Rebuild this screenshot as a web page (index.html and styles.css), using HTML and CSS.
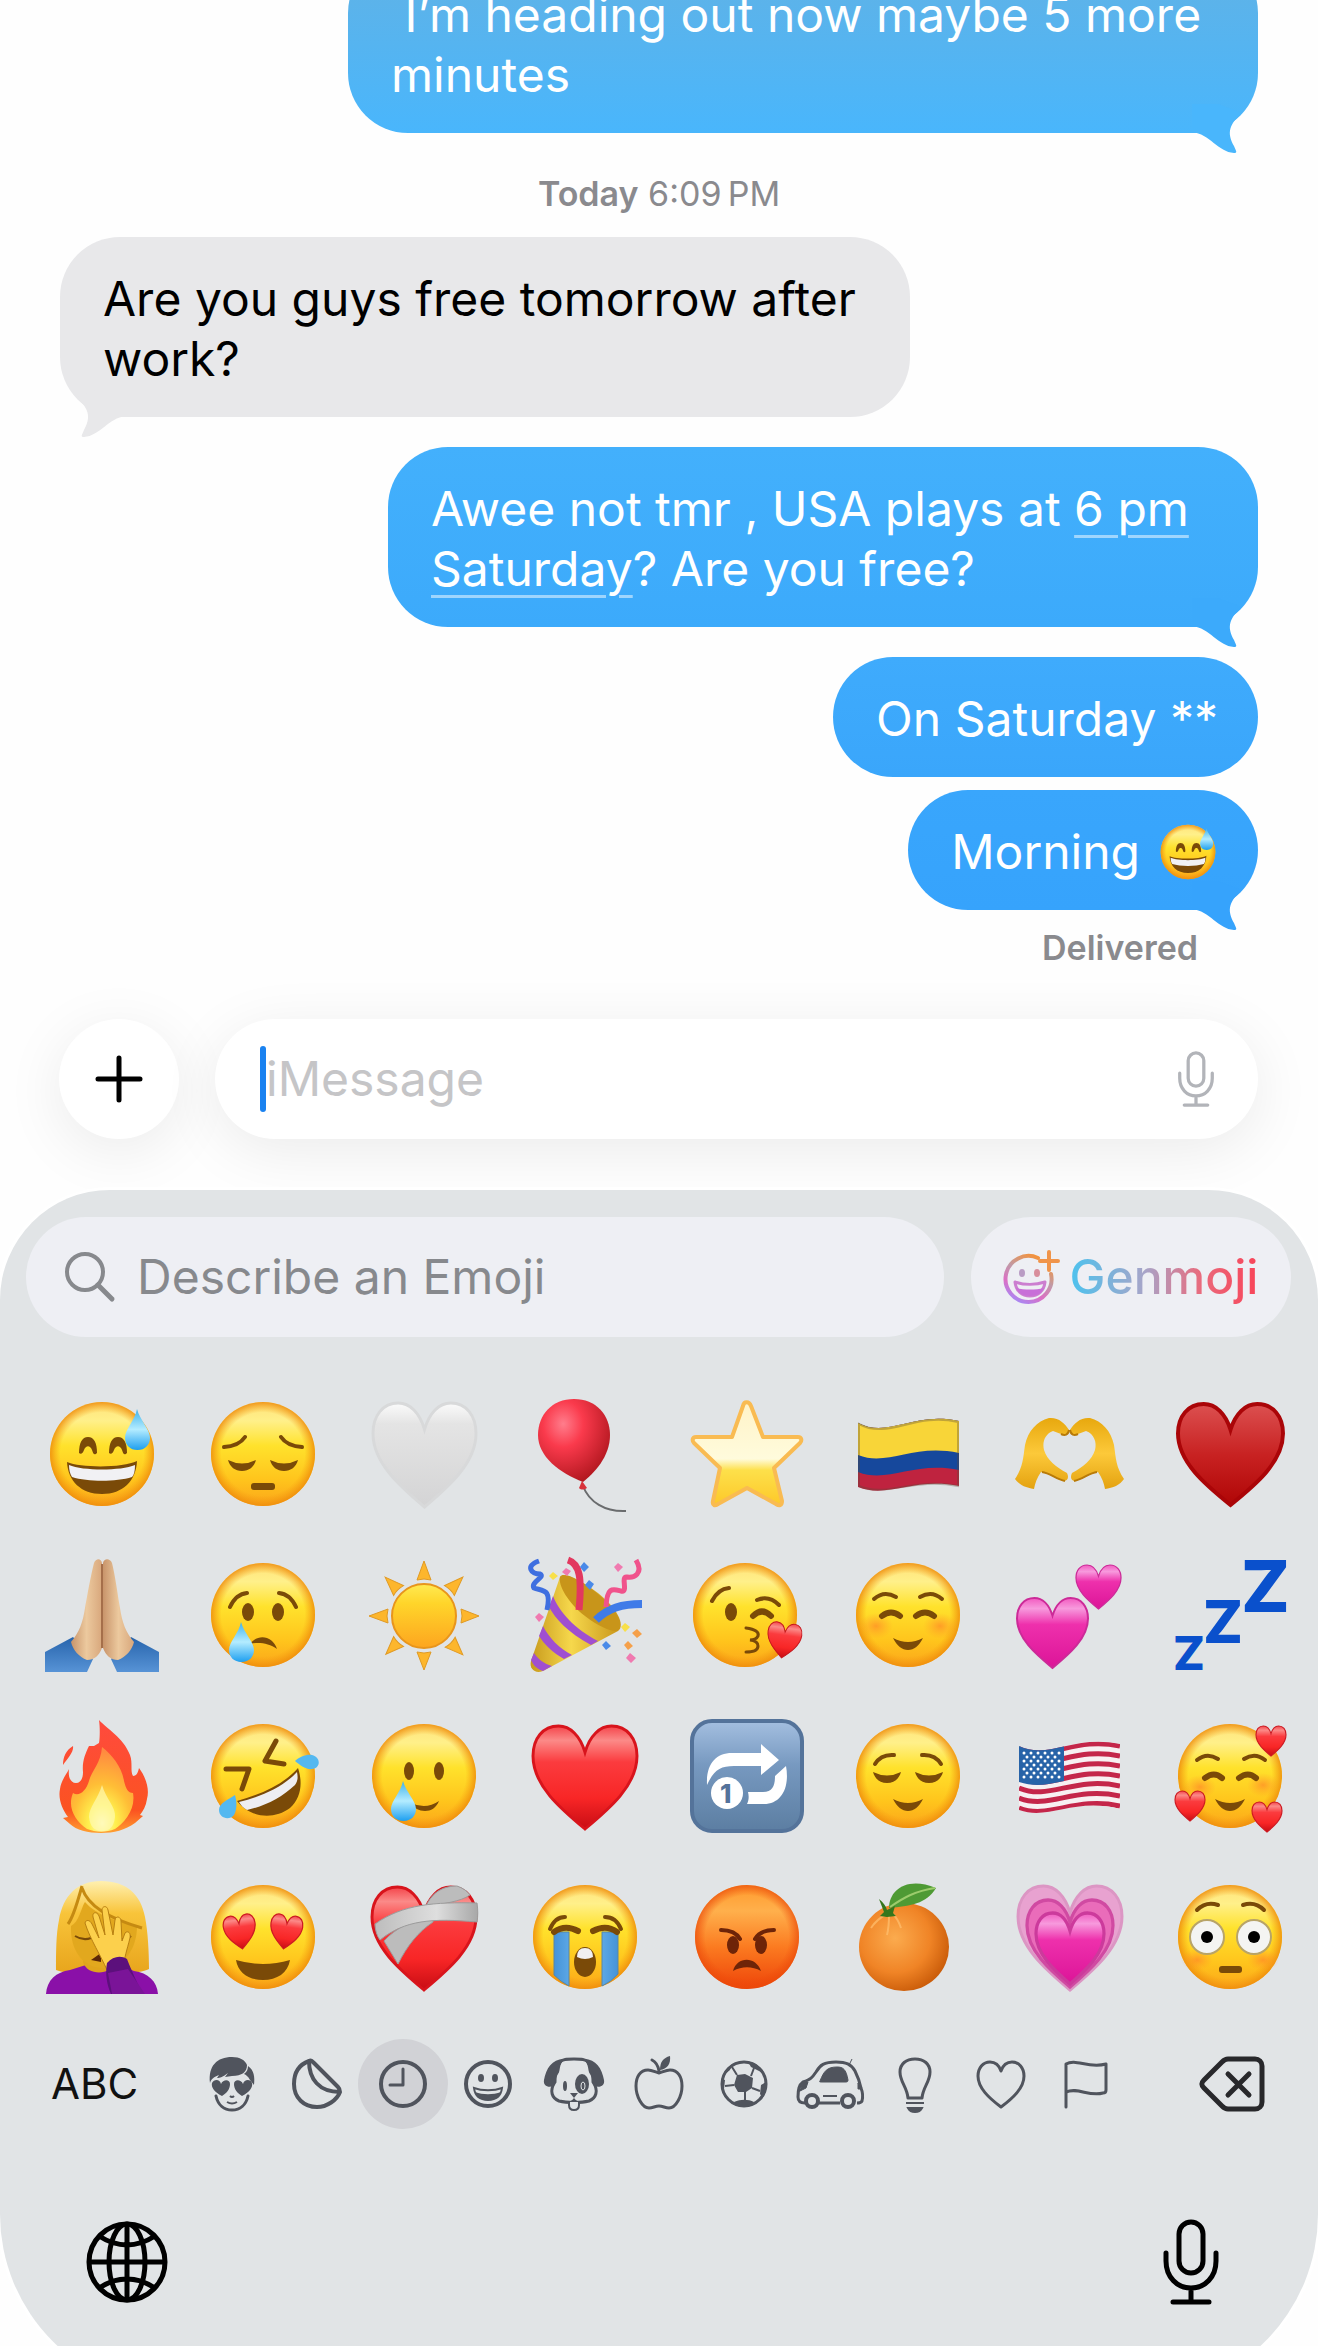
FILE: index.html
```
<!DOCTYPE html>
<html lang="en">
<head>
    <meta charset="UTF-8">
    <meta name="viewport" content="width=device-width, initial-scale=1.0">
    <title>Messages</title>
    <link rel="stylesheet" href="styles.css">
</head>
<body>
    <!-- Shared shapes and gradients -->
    <svg class="sprite" aria-hidden="true">
        <defs>
            <linearGradient id="face-fill" x1="0" y1="0" x2="0" y2="1">
                <stop offset="0" stop-color="#ffe27a"/>
                <stop offset=".18" stop-color="#fff08a"/>
                <stop offset=".42" stop-color="#ffe22c"/>
                <stop offset=".75" stop-color="#ffc41c"/>
                <stop offset="1" stop-color="#fba51a"/>
            </linearGradient>
            <radialGradient id="face-edge">
                <stop offset=".8" stop-color="#f59a10" stop-opacity="0"/>
                <stop offset="1" stop-color="#ee8c0c" stop-opacity=".85"/>
            </radialGradient>
            <linearGradient id="angry-fill" x1="0" y1="0" x2="0" y2="1">
                <stop offset="0" stop-color="#ff9a2c"/>
                <stop offset=".25" stop-color="#ffb04c"/>
                <stop offset=".6" stop-color="#fb7a20"/>
                <stop offset="1" stop-color="#ee4409"/>
            </linearGradient>
            <radialGradient id="angry-edge">
                <stop offset=".8" stop-color="#ee4a0a" stop-opacity="0"/>
                <stop offset="1" stop-color="#ea4a0a" stop-opacity=".7"/>
            </radialGradient>
            <radialGradient id="blush">
                <stop offset="0" stop-color="#ff6a2a" stop-opacity=".5"/>
                <stop offset="1" stop-color="#ff8a2a" stop-opacity="0"/>
            </radialGradient>
            <linearGradient id="drop-fill" x1="0" y1="0" x2="0" y2="1">
                <stop offset="0" stop-color="#3eb2ea"/>
                <stop offset=".5" stop-color="#b4ecff"/>
                <stop offset="1" stop-color="#1d9ff0"/>
            </linearGradient>
            <linearGradient id="red-fill" x1="0" y1="0" x2="0" y2="1">
                <stop offset="0" stop-color="#f4444a"/>
                <stop offset=".14" stop-color="#fb8a88"/>
                <stop offset=".35" stop-color="#fb3b3e"/>
                <stop offset=".7" stop-color="#f82626"/>
                <stop offset="1" stop-color="#c80d14"/>
            </linearGradient>
            <linearGradient id="suit-fill" x1="0" y1="0" x2="0" y2="1">
                <stop offset="0" stop-color="#dc5050"/>
                <stop offset=".5" stop-color="#c82222"/>
                <stop offset="1" stop-color="#b00606"/>
            </linearGradient>
            <linearGradient id="white-fill" x1="0" y1="0" x2="0" y2="1">
                <stop offset="0" stop-color="#fbfbfb"/>
                <stop offset=".2" stop-color="#e4e4e4"/>
                <stop offset="1" stop-color="#d4d4d5"/>
            </linearGradient>
            <linearGradient id="pink-fill" x1="0" y1="0" x2="0" y2="1">
                <stop offset="0" stop-color="#f25ac0"/>
                <stop offset=".15" stop-color="#f79add"/>
                <stop offset=".38" stop-color="#ee30ac"/>
                <stop offset="1" stop-color="#dc1498"/>
            </linearGradient>
            <radialGradient id="balloon-fill" cx=".35" cy=".3" r=".8">
                <stop offset="0" stop-color="#ff7d8c"/>
                <stop offset=".35" stop-color="#fa3a4c"/>
                <stop offset="1" stop-color="#a81219"/>
            </radialGradient>
            <linearGradient id="star-fill" x1="0" y1="0" x2="0" y2="1">
                <stop offset="0" stop-color="#fff3c8"/>
                <stop offset=".55" stop-color="#fffbdc"/>
                <stop offset=".66" stop-color="#fde04a"/>
                <stop offset="1" stop-color="#fdc829"/>
            </linearGradient>
            <linearGradient id="sun-fill" x1="0" y1="0" x2="0" y2="1">
                <stop offset="0" stop-color="#ffea52"/>
                <stop offset=".3" stop-color="#ffd52a"/>
                <stop offset="1" stop-color="#fda51f"/>
            </linearGradient>
            <linearGradient id="hand-fill" x1="0" y1="0" x2="0" y2="1">
                <stop offset="0" stop-color="#e8a80e"/>
                <stop offset=".5" stop-color="#fcc93a"/>
                <stop offset="1" stop-color="#e4a210"/>
            </linearGradient>
            <linearGradient id="cone-fill" x1="0" y1="0" x2="1" y2="0">
                <stop offset="0" stop-color="#c89a1c"/>
                <stop offset=".45" stop-color="#f6d84c"/>
                <stop offset="1" stop-color="#c8951a"/>
            </linearGradient>
            <linearGradient id="fire-fill" x1="0" y1="0" x2="0" y2="1">
                <stop offset="0" stop-color="#ff4a3e"/>
                <stop offset=".8" stop-color="#fb5321"/>
                <stop offset="1" stop-color="#ffa030"/>
            </linearGradient>
            <radialGradient id="flame-fill" cx=".5" cy=".9" r=".85">
                <stop offset="0" stop-color="#fffbd0"/>
                <stop offset=".25" stop-color="#fff04e"/>
                <stop offset=".55" stop-color="#ffbe36"/>
                <stop offset="1" stop-color="#ff8a40"/>
            </radialGradient>
            <linearGradient id="square-fill" x1="0" y1="0" x2="0" y2="1">
                <stop offset="0" stop-color="#a4bfe0"/>
                <stop offset=".4" stop-color="#7799c0"/>
                <stop offset="1" stop-color="#5c7ea2"/>
            </linearGradient>
            <radialGradient id="orange-fill" cx=".4" cy=".4" r=".65">
                <stop offset="0" stop-color="#fbab4e"/>
                <stop offset=".6" stop-color="#f08426"/>
                <stop offset="1" stop-color="#c85a08"/>
            </radialGradient>
            <linearGradient id="hair-fill" x1="0" y1="0" x2="0" y2="1">
                <stop offset="0" stop-color="#fff0b0"/>
                <stop offset=".35" stop-color="#f8c43a"/>
                <stop offset="1" stop-color="#e8a51c"/>
            </linearGradient>
            <linearGradient id="bandage-fill" x1="0" y1="0" x2="1" y2="0">
                <stop offset="0" stop-color="#bdbdbd"/>
                <stop offset=".6" stop-color="#dedede"/>
                <stop offset="1" stop-color="#a8a8a8"/>
            </linearGradient>
            <linearGradient id="stream-fill" x1="0" y1="0" x2="1" y2="0">
                <stop offset="0" stop-color="#4593d8"/>
                <stop offset=".5" stop-color="#74bdf4"/>
                <stop offset="1" stop-color="#4593d8"/>
            </linearGradient>
            <linearGradient id="sleeve-fill" x1="0" y1="0" x2="0" y2="1">
                <stop offset="0" stop-color="#2764ac"/>
                <stop offset="1" stop-color="#5793d6"/>
            </linearGradient>
            <linearGradient id="skin-fill" x1="0" y1="0" x2="1" y2="0">
                <stop offset="0" stop-color="#c8946a"/>
                <stop offset=".5" stop-color="#ecc99e"/>
                <stop offset="1" stop-color="#d8a77c"/>
            </linearGradient>
            <linearGradient id="genmoji-fill" x1=".2" y1="1" x2=".7" y2="0">
                <stop offset="0" stop-color="#a48af8"/>
                <stop offset=".3" stop-color="#dc6fc4"/>
                <stop offset=".6" stop-color="#c09aa8"/>
                <stop offset="1" stop-color="#f59238"/>
            </linearGradient>

            <symbol id="face" viewBox="0 0 114 114">
                <circle cx="57" cy="57" r="52" fill="url(#face-fill)"/>
                <circle cx="57" cy="57" r="52" fill="url(#face-edge)"/>
            </symbol>
            <symbol id="heart" viewBox="0 0 106 106" preserveAspectRatio="none">
                <path d="M53 27C48 10 38 0 26 0 10 0 0 13 0 31c0 30 28 54 53 75 25-21 53-45 53-75C106 13 96 0 80 0 68 0 58 10 53 27z"/>
            </symbol>
            <symbol id="drop" viewBox="0 0 25 40" preserveAspectRatio="none">
                <path d="M12 0c3 11 13 20 13 28 0 7-5 12-12.500 12S0 35 0 28C0 20 10 11 12 0z" fill="url(#drop-fill)"/>
            </symbol>
            <symbol id="sweat" viewBox="0 0 114 114">
                <use href="#face"/>
                <g fill="#7a4a08">
                    <path d="M34 56c0-10 3-16 9-16s9 6 9 16c-3 3-4 0-5-3-2-5-6-5-8 0-1 3-3 5-5 3zM64 56c0-10 3-16 9-16s9 6 9 16c-3 3-4 0-5-3-2-5-6-5-8 0-1 3-3 5-5 3z"/>
                    <path d="M22 65c14 6 56 6 70-1-1 20-14 33-35 33S23 84 22 65z"/>
                </g>
                <path d="M24 68c14 6 52 6 66 0 0 6-1 10-3 12-16 5-44 5-60 0-2-3-3-7-3-12z" fill="#f1f1f4"/>
                <use href="#drop" x="80" y="12" width="25" height="41"/>
            </symbol>
            <symbol id="tail" viewBox="0 0 60 50">
                <path d="M-6 28C12 30 20 48 36 49 40 49 38 47 36 42 30 31 29 22 44 9L20 0H-6z"/>
            </symbol>
            <symbol id="mic" viewBox="0 0 60 86">
                <g fill="none" stroke="currentColor" stroke-width="5" stroke-linecap="round">
                    <rect x="18" y="3" width="24" height="51" rx="12"/>
                    <path d="M5 34v8c0 16 11 27 25 27s25-11 25-27v-8M30 69v14M12 83h36"/>
                </g>
            </symbol>
        </defs>
    </svg>

    <div class="phone">
        <main class="thread">
            <div class="bubble sent first">&nbsp;I’m heading out now maybe 5 more minutes<svg class="tail"><use href="#tail"/></svg></div>
            <p class="stamp"><b>Today</b> 6:09&#8239;PM</p>
            <div class="bubble received">Are you guys free tomorrow after work?<svg class="tail"><use href="#tail"/></svg></div>
            <div class="bubble sent second">Awee not tmr , USA plays at <a href="#">6 pm Saturday</a>? Are you free?<svg class="tail"><use href="#tail"/></svg></div>
            <div class="bubble sent third">On Saturday **</div>
            <div class="bubble sent fourth">Morning <svg class="inline-emoji" role="img" aria-label="grinning face with sweat"><use href="#sweat"/></svg><svg class="tail"><use href="#tail"/></svg></div>
            <p class="receipt">Delivered</p>
        </main>

        <form class="compose">
            <button type="button" class="add" aria-label="Add">
                <svg viewBox="0 0 48 48"><path d="M24 3v42M3 24h42" stroke="#000" stroke-width="5" stroke-linecap="round"/></svg>
            </button>
            <div class="field">
                <span class="caret"></span>
                <input type="text" placeholder="iMessage" aria-label="iMessage">
                <button type="button" class="voice" aria-label="Record audio"><svg><use href="#mic"/></svg></button>
            </div>
        </form>

        <section class="keyboard">
            <div class="search-row">
                <label class="search">
                    <svg viewBox="0 0 50 50"><circle cx="20" cy="20" r="18" fill="none" stroke="#87898d" stroke-width="4"/><path d="M33 33l14 14" stroke="#87898d" stroke-width="5" stroke-linecap="round"/></svg>
                    <input type="text" placeholder="Describe an Emoji" aria-label="Describe an Emoji">
                </label>
                <button type="button" class="genmoji">
                    <svg viewBox="0 0 54 54">
                        <path d="M34 8A23 23 0 1 0 47 24" fill="none" stroke="url(#genmoji-fill)" stroke-width="4" stroke-linecap="round"/>
                        <path d="M45 2v18M36 11h18" stroke="#f0944a" stroke-width="4" stroke-linecap="round"/>
                        <ellipse cx="18" cy="23" rx="3" ry="4" fill="#b99cc4"/>
                        <ellipse cx="33" cy="23" rx="3" ry="4" fill="#d88e9c"/>
                        <path d="M11 32c9 3 21 3 30 0-1 9-7 14-15 14s-14-5-15-14z" fill="none" stroke="#cc7fd0" stroke-width="3" stroke-linejoin="round"/>
                        <path d="M12 38c9 2 19 2 28 0-2 5-7 8-14 8s-12-3-14-8z" fill="#c86fd8"/>
                    </svg>
                    <span>Genmoji</span>
                </button>
            </div>

            <div class="emoji-grid">
                <!-- Row 1 -->
                <button type="button" aria-label="grinning face with sweat"><svg><use href="#sweat"/></svg></button>
                <button type="button" aria-label="pensive face"><svg viewBox="0 0 114 114">
                    <use href="#face"/>
                    <path d="M18 50q15-1 21-10M75 40q6 9 21 10" class="line"/>
                    <path d="M22 63q14 7 28 0c-2 7-7 11-14 11s-12-4-14-11zM64 63q14 7 28 0c-2 7-7 11-14 11s-12-4-14-11z" class="brown"/>
                    <rect x="45" y="86" width="24" height="7" rx="3" class="brown"/>
                </svg></button>
                <button type="button" aria-label="white heart"><svg viewBox="0 0 114 114">
                    <use href="#heart" x="6" y="6" width="103" height="104" fill="url(#white-fill)" stroke="#d8d9da" stroke-width="3"/>
                </svg></button>
                <button type="button" aria-label="balloon"><svg viewBox="0 0 114 114">
                    <path d="M55 89c6 16 22 26 43 25" fill="none" stroke="#6a6c6e" stroke-width="2"/>
                    <path d="M46 2C68 2 82 18 82 38 82 60 66 76 55 85 32 76 10 60 10 38 10 18 24 2 46 2z" fill="url(#balloon-fill)"/>
                    <path d="M54 84l5 7c-3 2-6 2-8 0z" fill="#d8323a"/>
                </svg></button>
                <button type="button" aria-label="star"><svg viewBox="0 0 114 114">
                    <path d="M53 9c1-5 6-5 8 0l12 31h35c4 0 4 4 2 6L84 71l8 33c0 5-3 5-6 3L57 91l-29 16c-3 2-6 2-5-3l7-33L4 46c-2-2-2-6 2-6h36z" fill="url(#star-fill)" stroke="#f9bb52" stroke-width="4" stroke-linejoin="round"/>
                </svg></button>
                <button type="button" aria-label="flag of Colombia"><svg viewBox="0 0 114 114">
                    <path d="M7 26c30 16 55-12 101-2v65c-46-9-71 13-101 1z" fill="#bf233f"/>
                    <path d="M7 26c30 16 55-12 101-2v49c-46-9-71 14-101 2z" fill="#16489c"/>
                    <path d="M7 26c30 16 55-12 101-2v32c-46-10-71 14-101 2z" fill="#f8d538"/>
                    <path d="M8 27c30 16 55-12 99-2v64c-46-9-71 12-99 0z" fill="none" stroke="#5c4a3a" stroke-opacity=".35" stroke-width="2"/>
                </svg></button>
                <button type="button" aria-label="heart hands"><svg viewBox="0 0 114 114">
                    <g id="half-hands">
                        <path d="M3 82c8-12 8-20 10-34 3-14 12-24 24-27 9-1 16 5 20 12-1 5-4 6-8 4l-8-3c-8 3-11 11-9 19 3 10 12 17 23 23 2 4 1 8-3 8-9-2-15-8-23-9-4 6-6 11-7 17-8-1-15-4-19-10z" fill="url(#hand-fill)"/>
                        <path d="M49 37c4 2 7 1 8-4M53 84c-9-2-15-8-23-9" fill="none" stroke="#b87a08" stroke-width="2"/>
                    </g>
                    <use href="#half-hands" transform="translate(115 0) scale(-1 1)"/>
                </svg></button>
                <button type="button" aria-label="heart suit"><svg viewBox="0 0 114 114">
                    <use href="#heart" x="5" y="7" width="105" height="101" fill="url(#suit-fill)" stroke="#aa0508" stroke-width="4"/>
                </svg></button>

                <!-- Row 2 -->
                <button type="button" aria-label="folded hands"><svg viewBox="0 0 114 114">
                    <path d="M0 94l28-15 20 22-6 13H0z" fill="url(#sleeve-fill)"/>
                    <path d="M114 94L86 79l-20 22 6 13h42z" fill="url(#sleeve-fill)"/>
                    <path d="M57 90c-3 8-8 12-15 12-8-3-14-10-16-18 8-9 12-20 14-34 2-11 6-34 9-45 2-5 7-5 8 0z" fill="url(#skin-fill)"/>
                    <path d="M58 90c3 8 8 12 15 12 8-3 14-10 16-18-8-9-12-20-14-34-2-11-5-34-8-45-2-5-8-5-9 0z" fill="url(#skin-fill)"/>
                    <path d="M57 6v84" stroke="#a56f4a" stroke-width="2"/>
                </svg></button>
                <button type="button" aria-label="crying face"><svg viewBox="0 0 114 114">
                    <use href="#face"/>
                    <path d="M24 49q6-13 17-14M73 35q11 1 17 14" class="line"/>
                    <ellipse cx="42" cy="54" rx="6" ry="9" class="brown"/>
                    <ellipse cx="72" cy="54" rx="6" ry="9" class="brown"/>
                    <path d="M44 86c8-11 23-8 27 5-8-6-19-7-27-5z" class="brown"/>
                    <use href="#drop" x="23" y="64" width="25" height="40"/>
                </svg></button>
                <button type="button" aria-label="sun"><svg viewBox="0 0 114 114">
                    <g fill="#fdb62c" stroke="#e09a24" stroke-width="1">
                        <g id="sun-rays"><path d="M57 3l7 19q-7-2-14 0zM57 112l7-18q-7 2-14 0zM2 58l19-7q-2 7 0 14zM112 58l-18-7q2 7 0 14z"/></g>
                        <use href="#sun-rays" transform="rotate(45 57 58)"/>
                    </g>
                    <circle cx="57" cy="58" r="32" fill="url(#sun-fill)" stroke="#e8951c" stroke-width="2"/>
                </svg></button>
                <button type="button" aria-label="party popper"><svg viewBox="0 0 114 114">
                    <path d="M32 19L3 103c-2 8 4 13 12 10l75-40c8-6-2-24-20-38S36 14 32 19z" fill="url(#cone-fill)"/>
                    <path d="M32 19c-2 8 8 26 25 39s32 18 34 13c4-8-6-23-22-36S35 13 32 19z" fill="#c8951a"/>
                    <path d="M25 38c6 16 22 33 45 45l-7 4C40 75 27 60 21 49zM15 68c6 12 16 22 29 29l-8 4c-11-6-20-15-25-23zM6 95c4 6 10 11 18 13l-9 5c-6-2-10-6-12-11z" fill="#a04fd0"/>
                    <path d="M40 2c12 4 14 18 11 50" fill="none" stroke="#e2385f" stroke-width="7"/>
                    <path d="M68 62c12-12 26-16 46-16" fill="none" stroke="#3f7be8" stroke-width="8"/>
                    <path d="M11 3C-3 8 3 16 12 16c6 3-10 8-6 14 8 3 18 0 13 22" fill="none" stroke="#3f6fe0" stroke-width="5"/>
                    <path d="M108 2c8 14-2 18-9 17s2 16-6 14-14-5-15 16" fill="none" stroke="#f0538c" stroke-width="5"/>
                    <path d="M56 4l5 5-5 5-4-5zM61 22l5 4-4 6-5-5zM78 83l5 5-5 4-4-5z" fill="#4a8ae8"/>
                    <path d="M38 10l5 3-4 5-5-4zM90 5l5 4-5 5-4-5zM102 95l6 5-5 5-5-5zM11 55l5 4-5 5-4-5z" fill="#f07ab0"/>
                    <path d="M25 14l5 4-5 4-4-4zM97 65l5 4-5 5-4-5z" fill="#f8e04a"/>
                    <path d="M109 71l5 5-5 4-5-5zM100 83l5 5-5 4-4-5z" fill="#f5a04a"/>
                </svg></button>
                <button type="button" aria-label="face blowing a kiss"><svg viewBox="0 0 114 114">
                    <use href="#face" x="-2"/>
                    <path d="M22 43q6-12 17-13M67 42q12-5 22 5" class="line"/>
                    <path d="M63 58q9-9 18 0" class="line thick"/>
                    <ellipse cx="41" cy="54" rx="6" ry="9" class="brown"/>
                    <path d="M56 70q14 2 12 8-2 4-8 4 8 1 8 6 0 6-12 6" fill="none" stroke="#7a4a08" stroke-width="3" stroke-linecap="round"/>
                    <use href="#heart" x="77" y="65" width="34" height="35" fill="url(#red-fill)" stroke="#c4161c" stroke-width="3" transform="rotate(8 94 82)"/>
                </svg></button>
                <button type="button" aria-label="smiling face"><svg viewBox="0 0 114 114">
                    <use href="#face"/>
                    <ellipse cx="25" cy="68" rx="17" ry="13" fill="url(#blush)"/><ellipse cx="89" cy="68" rx="17" ry="13" fill="url(#blush)"/>
                    <path d="M23 41q10-9 22-2M69 39q12-7 22 2" class="line"/>
                    <path d="M31 58q9-7 18 0M65 58q9-7 18 0" class="line thick"/>
                    <path d="M42 80q15 8 30 0c-4 8-9 12-15 12s-11-4-15-12z" class="brown"/>
                </svg></button>
                <button type="button" aria-label="two hearts"><svg viewBox="0 0 114 114">
                    <use href="#heart" x="64" y="7" width="45" height="44" fill="url(#pink-fill)" stroke="#cc2a98" stroke-width="3"/>
                    <use href="#heart" x="5" y="40" width="71" height="70" fill="url(#pink-fill)" stroke="#cc2a98" stroke-width="3"/>
                </svg></button>
                <button type="button" aria-label="zzz"><svg viewBox="0 0 114 114" class="zzz">
                    <text x="68" y="54" font-size="72">Z</text>
                    <text x="30" y="85" font-size="59">Z</text>
                    <text x="0" y="112" font-size="47">Z</text>
                </svg></button>

                <!-- Row 3 -->
                <button type="button" aria-label="fire"><svg viewBox="0 0 114 114">
                    <path d="M54 1c8 9 24 17 31 35 3 8 0 16 3 21 4 0 5-4 6-8 6 8 11 20 8 31-1 7-4 12-7 16l3 1-8 7c-10 7-21 10-34 10S31 111 25 105l-7-6 5-1C17 90 13 80 15 70c1-8 6-14 9-20-1 7 1 14 7 14 5 0 7-5 7-11-1-10 2-18 6-26h5l5-3c1-6 1-16 0-23zM28 27c1 6-5 12-10 19 0-8 3-15 10-19z" fill="url(#fire-fill)"/>
                    <path d="M57 28c10 8 20 20 22 34 2 8 4 12 9 12 3 17-9 30-18 36-10 4-20 3-28 0-12-8-20-22-14-36 6 4 13-2 16-12 2-9 12-18 13-34z" fill="url(#flame-fill)"/>
                    <path d="M57 66c4 14 14 22 13 32-1 9-5 14-13 14s-12-5-13-14c0-10 9-18 13-32z" fill="#fff9b0" fill-opacity=".7"/>
                </svg></button>
                <button type="button" aria-label="rolling on the floor laughing"><svg viewBox="0 0 114 114">
                    <use href="#face"/>
                    <path d="M20 50h23L36 70M70 22L59 42l19 3" fill="none" stroke="#7a4a08" stroke-width="5" stroke-linejoin="round" stroke-linecap="round"/>
                    <path d="M31 82c25-7 47-17 61-33 5 15 3 30-8 40-16 12-40 10-53-7z" class="brown"/>
                    <path d="M33 83c24-6 44-15 58-30 1 5 1 9-2 13-14 13-30 21-48 25-4-2-6-5-8-8z" fill="#eeeef2"/>
                    <path d="M89 42c4-4 12-7 17-6 9 2 9 13 0 14-6 1-12-4-17-8zM29 76c2 7 2 15-1 20-5 6-15 3-15-5 0-7 9-10 16-15z" fill="#54b8f0"/>
                </svg></button>
                <button type="button" aria-label="smiling face with tear"><svg viewBox="0 0 114 114">
                    <use href="#face"/>
                    <ellipse cx="42" cy="52" rx="5" ry="9" class="brown"/><ellipse cx="72" cy="52" rx="5" ry="9" class="brown"/>
                    <path d="M44 84q15 7 28-2c-3 7-8 10-14 10s-11-3-14-8z" class="brown"/>
                    <use href="#drop" x="24" y="62" width="25" height="40"/>
                </svg></button>
                <button type="button" aria-label="red heart"><svg viewBox="0 0 114 114">
                    <use href="#heart" x="5" y="7" width="104" height="103" fill="url(#red-fill)" stroke="#d8141c" stroke-width="3"/>
                </svg></button>
                <button type="button" aria-label="repeat one"><svg viewBox="0 0 114 114">
                    <rect x="2" y="2" width="110" height="110" rx="20" fill="url(#square-fill)" stroke="#54739a" stroke-width="4"/>
                    <path d="M17 66c-1-20 8-32 25-32h29v-9l18 16-18 15V47H44c-14 0-20 4-27 19zM96 47c4 22-5 38-22 38H57c2-4 2-8 1-12h15c10 0 12-7 12-16z" fill="#fff"/>
                    <circle cx="37" cy="74" r="16" fill="#fff"/>
                    <text x="30" y="84" class="badge-digit">1</text>
                </svg></button>
                <button type="button" aria-label="relieved face"><svg viewBox="0 0 114 114">
                    <use href="#face"/>
                    <path d="M24 45q6-10 19-9M71 36q13-1 19 9" class="line"/>
                    <path d="M22 53q14 7 28 0c-2 7-7 11-14 11s-12-4-14-11zM64 53q14 7 28 0c-2 7-7 11-14 11s-12-4-14-11zM42 80q15 8 30 0c-4 8-9 12-15 12s-11-4-15-12z" class="brown"/>
                </svg></button>
                <button type="button" aria-label="flag of the United States"><svg viewBox="0 0 114 114">
                    <clipPath id="us-clip"><path d="M7 27c30 14 55-12 101-2v65c-46-12-71 12-101 1z"/></clipPath>
                    <g clip-path="url(#us-clip)">
                        <path d="M0 0h114v114H0z" fill="#f7f0f2"/>
                        <path d="M7 29c30 14 55-12 101-2M7 39c30 14 55-12 101-2M7 49c30 14 55-12 101-2M7 59c30 14 55-12 101-2M7 69c30 13 55-12 101-2M7 79c30 12 55-12 101-2M7 89c30 12 55-12 101-2" fill="none" stroke="#c4264a" stroke-width="5"/>
                        <path d="M7 20h45v42c-17 4-30 6-45 1z" fill="#2763a8"/>
                        <g stroke="#fff" stroke-width="3" stroke-linecap="round" stroke-dasharray="0 7">
                            <path d="M12 34h37M15 38h34M12 42h37M15 46h34M12 50h37M15 54h34M12 58h37"/>
                        </g>
                    </g>
                </svg></button>
                <button type="button" aria-label="smiling face with hearts"><svg viewBox="0 0 114 114">
                    <use href="#face"/>
                    <ellipse cx="27" cy="68" rx="16" ry="12" fill="url(#blush)"/><ellipse cx="90" cy="66" rx="16" ry="12" fill="url(#blush)"/>
                    <path d="M24 41q10-8 21-1M71 40q11-7 21 1" class="line"/>
                    <path d="M32 59q9-7 17 0M66 59q9-7 17 0" class="line thick"/>
                    <path d="M42 80q15 8 30 0c-4 8-9 12-15 12s-11-4-15-12z" class="brown"/>
                    <g fill="url(#red-fill)" stroke="#cc1a22" stroke-width="4">
                        <use href="#heart" x="83" y="7" width="30" height="30"/>
                        <use href="#heart" x="2" y="72" width="30" height="30"/>
                        <use href="#heart" x="79" y="83" width="30" height="30"/>
                    </g>
                </svg></button>

                <!-- Row 4 -->
                <button type="button" aria-label="woman facepalming"><svg viewBox="0 0 114 114">
                    <path d="M56 1c26 0 40 14 44 36 3 15 4 36 4 52-10 5-30 5-46 2-16 3-36 3-47-1 0-17 0-36 3-50C18 16 32 1 56 1z" fill="url(#hair-fill)"/>
                    <path d="M1 114c1-14 10-22 24-24l16-5h34l14 6c14 2 23 10 24 23z" fill="#8a10a8"/>
                    <path d="M38 82c4 14 28 14 32 0l-3-8H41z" fill="#e0a41c"/>
                    <path d="M26 46c8-4 10-18 14-24 12 14 34 20 52 24 0 24-14 42-34 42S25 70 26 46z" fill="#e2a81e"/>
                    <path d="M37 6c-4 14-8 30-14 38M37 8c6 18 26 30 60 40" fill="none" stroke="#c58a12" stroke-width="3"/>
                    <path d="M30 56q8 5 16 2M76 59q6 1 10-3" fill="none" stroke="#7a4a08" stroke-width="2"/>
                    <path d="M46 80l10-7v9z" fill="#5a2608"/>
                    <path d="M40 43c1-4 5-3 7 1l7 14-6-21c-1-5 4-6 6-1l6 19-3-25c0-4 5-5 6 0l5 25 2-15c1-5 6-3 6 1l1 20 3-8c3-3 6 0 5 5-3 12-6 20-6 28l-17 4c-6-14-17-31-22-47z" fill="#fcd04c" stroke="#b87f12" stroke-width="1"/>
                    <path d="M62 83c6-7 14-8 20-4 4 10 10 24 16 35H66c-4-9-6-20-4-31z" fill="#5c107c"/>
                    <path d="M63 93l20-4 17 25H67z" fill="#7a1498"/>
                </svg></button>
                <button type="button" aria-label="smiling face with heart eyes"><svg viewBox="0 0 114 114">
                    <use href="#face"/>
                    <g fill="url(#red-fill)" stroke="#cc1a22" stroke-width="4">
                        <use href="#heart" x="18" y="35" width="32" height="34" transform="rotate(-8 34 51)"/>
                        <use href="#heart" x="64" y="35" width="32" height="34" transform="rotate(8 80 51)"/>
                    </g>
                    <path d="M30 80q27 8 54 0c-2 13-13 20-27 20s-25-7-27-20z" class="brown"/>
                </svg></button>
                <button type="button" aria-label="mending heart"><svg viewBox="0 0 114 114">
                    <use href="#heart" x="5" y="7" width="104" height="103" fill="url(#red-fill)" stroke="#d8141c" stroke-width="3"/>
                    <path d="M60 24c6-12 16-18 30-18 6 2 10 5 13 9-10 7-26 8-43 12zM66 42c-15 10-26 24-35 42L17 61c12-13 28-22 49-22z" fill="#bcbcbc" stroke="#9c9c9c" stroke-width="1"/>
                    <path d="M8 44c28-20 60-22 102-21 1 7 1 13 0 19-45-4-72-2-97 18-3-4-5-10-5-16z" fill="url(#bandage-fill)" stroke="#9c9c9c" stroke-width="1"/>
                </svg></button>
                <button type="button" aria-label="loudly crying face"><svg viewBox="0 0 114 114">
                    <use href="#face"/>
                    <path d="M26 52h15v54q-8-4-15-11zM74 52h16v42q-7 8-16 12z" fill="url(#stream-fill)" stroke="#5a86a0" stroke-width="1"/>
                    <path d="M22 49q5-12 15-12M77 37q11 0 16 12" class="line"/>
                    <path d="M26 52q11-8 24-1M65 51q13-7 24 1" class="line thick"/>
                    <ellipse cx="57" cy="82" rx="11" ry="15" class="brown"/>
                    <path d="M49 77q0-9 8-9t8 9q-8 4-16 0z" fill="#f0f0f2"/>
                </svg></button>
                <button type="button" aria-label="pouting face"><svg viewBox="0 0 114 114">
                    <circle cx="57" cy="57" r="52" fill="url(#angry-fill)"/>
                    <circle cx="57" cy="57" r="52" fill="url(#angry-edge)"/>
                    <path d="M31 50q14 0 19 9M84 50q-14 0-19 9" fill="none" stroke="#6e2408" stroke-width="4" stroke-linecap="round"/>
                    <ellipse cx="43" cy="65" rx="6" ry="9" fill="#6e2408"/><ellipse cx="71" cy="65" rx="6" ry="9" fill="#6e2408"/>
                    <path d="M43 91c4-15 23-15 28 0-9-5-19-5-28 0z" fill="#6e2408"/>
                </svg></button>
                <button type="button" aria-label="tangerine"><svg viewBox="0 0 114 114">
                    <ellipse cx="53" cy="67" rx="45" ry="44" fill="url(#orange-fill)"/>
                    <path d="M36 34c-8 4-12 8-16 14M38 35c0 8 0 12-2 20M42 34c4 4 6 8 8 14" fill="none" stroke="#ffc070" stroke-opacity=".7" stroke-width="2"/>
                    <path d="M38 28C38 10 56-4 85 8 76 24 58 26 38 28z" fill="#4e9a34"/>
                    <path d="M39 27C52 18 64 11 84 8" fill="none" stroke="#9ccc6c" stroke-width="2"/>
                    <path d="M28 19c4 3 7 7 8 11l8-4-2 7 3 3-9 1-7-1 4-4z" fill="#35761c"/>
                </svg></button>
                <button type="button" aria-label="growing heart"><svg viewBox="0 0 114 114">
                    <use href="#heart" x="6" y="6" width="104" height="104" fill="#e8a2d0" stroke="#dc96c4" stroke-width="3"/>
                    <use href="#heart" x="15" y="20" width="86" height="87" fill="#ea6cba" stroke="#d04aa2" stroke-width="4"/>
                    <use href="#heart" x="24" y="33" width="68" height="71" fill="url(#pink-fill)" stroke="#cc3a9c" stroke-width="5"/>
                </svg></button>
                <button type="button" aria-label="flushed face"><svg viewBox="0 0 114 114">
                    <use href="#face"/>
                    <ellipse cx="24" cy="80" rx="16" ry="11" fill="url(#blush)"/><ellipse cx="90" cy="80" rx="16" ry="11" fill="url(#blush)"/>
                    <path d="M24 30q9-9 21-5M70 25q12-4 21 5" class="line"/>
                    <circle cx="34" cy="57" r="17" fill="#f4f4f2" stroke="#b8a468" stroke-width="2"/><circle cx="81" cy="57" r="17" fill="#f4f4f2" stroke="#b8a468" stroke-width="2"/>
                    <circle cx="34" cy="57" r="6"/><circle cx="81" cy="57" r="6"/>
                    <rect x="46" y="86" width="23" height="7" rx="3" class="brown"/>
                </svg></button>
            </div>

            <div class="tab-bar">
                <button type="button" class="abc">ABC</button>
                <nav class="tabs">
                    <button type="button" aria-label="Memoji"><svg viewBox="0 0 54 54">
                        <path d="M5 26C3 9 12 0 27 0c8 0 13 3 15 8 0 7-5 11-15 11l-7 1 3-4c-5 4-8 5-11 5l2-3c-5 2-8 4-9 8zM43 9c6 4 7 11 6 19l-4-5c-2-4-4-5-6-6 3-2 4-5 4-8z" fill="#50545d"/>
                        <path d="M17 39C9 35 6 30 7 26c2-4 8-4 9 1 2-5 9-5 9 0 0 5-3 9-8 12zM37 39c-5-3-8-7-8-12 0-5 7-5 9 0 1-5 8-5 9-1 1 4-2 9-10 13z" fill="#50545d"/>
                        <path d="M11 39c2 9 8 14 16 14s14-5 16-14" class="tab-line thin"/>
                        <path d="M22 45q5 3 10 0M25 39q2 2 4 0" fill="none" stroke="#50545d" stroke-width="2"/>
                    </svg></button>
                    <button type="button" aria-label="Stickers"><svg viewBox="0 0 54 54">
                        <path d="M19 4C8 8 4 17 4 27c0 14 10 23 23 23 10 0 20-7 23-15 0-2 0-3-2-5L24 6c-2-2-3-3-5-2zM19 4c0 18 10 31 31 31" class="tab-line"/>
                    </svg></button>
                    <button type="button" aria-label="Recent" class="active"><svg viewBox="0 0 54 54">
                        <circle cx="27" cy="27" r="22" class="tab-line"/><path d="M27 12v16H14" class="tab-line thin"/>
                    </svg></button>
                    <button type="button" aria-label="Smileys"><svg viewBox="0 0 54 54">
                        <circle cx="27" cy="27" r="22" class="tab-line"/>
                        <ellipse cx="20" cy="21" rx="3" ry="4" fill="#50545d"/><ellipse cx="34" cy="21" rx="3" ry="4" fill="#50545d"/>
                        <path d="M13 31c8 3 20 3 28 0-1 8-6 12-14 12s-13-4-14-12z" fill="none" stroke="#50545d" stroke-width="2"/>
                        <path d="M14 35c8 3 18 3 26 0-2 6-6 8-13 8s-11-2-13-8z" fill="#50545d"/>
                    </svg></button>
                    <button type="button" aria-label="Animals"><svg viewBox="-4 0 62 54">
                        <path d="M13 5C15 2 20 2 27 2s12 0 14 3c5 8 5 14 5 20 6 9 3 16-4 19-8 2-22 2-30 0-7-3-10-10-4-19 0-6 0-12 5-20z" fill="none" stroke="#50545d" stroke-width="3"/>
                        <path d="M18 2C6 1-1 11-3 23c-1 6 4 8 10 6 2-4 1-7 4-12 3-4 0-9 7-15zM36 2c12-1 19 9 21 21 1 6-4 8-10 6-2-4-1-7-4-12-3-4 0-9-7-15z" fill="#50545d"/>
                        <ellipse cx="35" cy="27" rx="7" ry="10" fill="#50545d"/>
                        <ellipse cx="18" cy="29" rx="2" ry="5" fill="#50545d"/>
                        <path d="M23 36h8l-4 5zM27 40v3M21 45q6-2 6-5 0 3 6 5" fill="#50545d"/>
                        <path d="M22 45v3q0 5 5 5t5-5v-3" fill="#e1e4e6" stroke="#50545d" stroke-width="2"/>
                        <ellipse cx="36" cy="29" rx="2" ry="4" fill="none" stroke="#e1e4e6" stroke-width="1"/>
                    </svg></button>
                    <button type="button" aria-label="Food"><svg viewBox="0 0 54 54">
                        <path d="M27 16c-4-1-7-3-11-3C8 13 4 20 4 29c0 10 6 22 13 22 4 0 6-2 10-2s6 2 10 2c7 0 13-12 13-22 0-9-4-16-12-16-4 0-7 2-11 3z" class="tab-line thin"/>
                        <path d="M27 14C26 8 24 5 20 3" class="tab-line thin"/>
                        <path d="M28 13c0-8 3-12 10-14 1 8-3 13-10 14z" fill="#50545d"/>
                    </svg></button>
                    <button type="button" aria-label="Activity"><svg viewBox="0 0 54 54">
                        <clipPath id="ball-clip"><circle cx="27" cy="27" r="23"/></clipPath>
                        <g clip-path="url(#ball-clip)">
                            <path d="M20 18l8-1 8 4-1 10-6 4h-8l-4-7zM30 3l12 5 6 9-6-3-8-4zM52 23l-8 5-1 9 5 7zM17 45c7-3 14-3 20 0l-4 7H20zM2 20l6 3-1 9-5-2zM6 14l9-7-2 6-6 5z" fill="#50545d"/>
                            <path d="M20 18l-5-8M17 28l-9 1M28 35v10M35 31l8 3M34 19l3-8" stroke="#50545d" stroke-width="2"/>
                        </g>
                        <circle cx="27" cy="27" r="22" fill="none" stroke="#50545d" stroke-width="3"/>
                    </svg></button>
                    <button type="button" aria-label="Travel"><svg viewBox="-7 0 68 54">
                        <path d="M2 46c-5 0-7-2-7-6 0-8 1-12 5-15 8-3 9-4 13-10 4-7 8-10 20-10 10 0 15 2 19 9 3 6 5 12 6 17 2 5 2 9 1 13-1 2-3 2-5 2M16 46h21" fill="none" stroke="#50545d" stroke-width="3"/>
                        <path d="M17 24c4-10 7-14 17-14 6 0 9 2 11 13 0 2-1 2-3 2H19c-2 0-3 0-2-1zM0 25l5 0-2 6-6 3zM55 26l3 6-3 0zM46 8l3-6" fill="#50545d" stroke="#50545d"/>
                        <circle cx="9" cy="44" r="6" class="tab-line"/><circle cx="45" cy="44" r="6" class="tab-line"/>
                        <path d="M20 39h14" stroke="#50545d" stroke-width="2"/>
                    </svg></button>
                    <button type="button" aria-label="Objects"><svg viewBox="0 0 54 54">
                        <path d="M20 41c-1-11-8-16-8-26C12 7 18 2 27 2s15 5 15 13c0 10-7 15-8 26z" class="tab-line thin"/>
                        <path d="M18 46h18M20 51h14q-2 4-7 4t-7-4z" fill="#50545d" stroke="#50545d" stroke-width="2"/>
                    </svg></button>
                    <button type="button" aria-label="Symbols"><svg viewBox="0 0 54 54">
                        <path d="M27 14C25 8 21 5 16 5 9 5 4 11 4 19c0 12 11 22 23 31 12-9 23-19 23-31 0-8-5-14-12-14-5 0-9 3-11 9z" class="tab-line thin"/>
                    </svg></button>
                    <button type="button" aria-label="Flags"><svg viewBox="0 0 54 54">
                        <path d="M7 50V7c10-6 22 5 40 0v26c0 2-1 3-3 3-14 4-25-6-37-1" class="tab-line thin"/>
                    </svg></button>
                </nav>
                <button type="button" class="delete" aria-label="Delete"><svg viewBox="0 0 66 56">
                    <path d="M29 3h27c4 0 7 3 7 7v36c0 4-3 7-7 7H29c-3 0-4-1-6-3L5 32c-3-3-3-5 0-8L23 6c2-2 3-3 6-3zM29 18l21 21M50 18L29 39" fill="none" stroke="#28282b" stroke-width="5" stroke-linecap="round"/>
                </svg></button>
            </div>

            <div class="bottom-row">
                <button type="button" aria-label="Next keyboard"><svg class="globe" viewBox="0 0 82 82">
                    <g fill="none" stroke="#000" stroke-width="5">
                        <circle cx="41" cy="41" r="38"/><ellipse cx="41" cy="41" rx="18" ry="38"/>
                        <path d="M41 3v76M3 41h76M13 15q28 18 56 0M13 67q28-18 56 0"/>
                    </g>
                </svg></button>
                <button type="button" aria-label="Dictate"><svg class="dictate"><use href="#mic"/></svg></button>
            </div>
        </section>
    </div>
</body>
</html>
```
FILE: styles.css
```
* {
    box-sizing: border-box;
}
body {
    margin: 0;
    background: #fefefe;
    font-family: Inter, "Liberation Sans", sans-serif;
    font-size: 48px;
    line-height: 60px;
    color: #000;
}
button {
    display: flex;
    align-items: center;
    justify-content: center;
    padding: 0;
    border: none;
    background: none;
    font: inherit;
    color: inherit;
    cursor: pointer;
}
input {
    flex: 1;
    min-width: 0;
    padding: 0;
    border: none;
    outline: none;
    background: none;
    font: inherit;
}
svg {
    display: block;
    overflow: visible;
}
symbol {
    overflow: visible;
}
.sprite {
    position: absolute;
    width: 0;
    height: 0;
}
.phone {
    display: flex;
    flex-direction: column;
    height: 100vh;
    overflow: hidden;
}

/* Conversation */
.thread {
    flex: 1;
    min-height: 0;
    display: flex;
    flex-direction: column;
    justify-content: flex-end;
    padding: 0 60px;
}
.bubble {
    position: relative;
    flex: none;
    max-width: 910px;
    padding: 32px 40px 28px 43px;
    border-radius: 60px;
}
.sent {
    align-self: flex-end;
    color: #fff;
    background: linear-gradient(var(--from), var(--to));
}
.sent a {
    color: inherit;
    text-decoration: underline;
    text-decoration-color: rgba(255, 255, 255, 0.5);
    text-decoration-thickness: 3px;
    text-underline-offset: 9px;
}
.first {
    --from: #62b2e4;
    --to: #49b6fc;
}
.second {
    --from: #43b0fc;
    --to: #3caafb;
    max-width: 870px;
    margin-top: 30px;
}
.third {
    --from: #3fabfc;
    --to: #3aa6fb;
    margin-top: 30px;
}
.fourth {
    --from: #39a6fc;
    --to: #36a3fc;
    display: flex;
    align-items: center;
    gap: 18px;
    margin-top: 13px;
}
.received {
    align-self: flex-start;
    max-width: 850px;
    padding-right: 36px;
    background: #e8e8ea;
    --to: #e8e8ea;
}
.tail {
    position: absolute;
    right: 0;
    bottom: -21px;
    width: 60px;
    height: 50px;
    fill: var(--to);
}
.received .tail {
    right: auto;
    left: 0;
    transform: scaleX(-1);
}
.inline-emoji {
    width: 60px;
    height: 60px;
}
.stamp {
    margin: 41px 0 23px;
    font-size: 34px;
    line-height: 40px;
    text-align: center;
    color: #8a8a8e;
}
.stamp b {
    font-weight: 600;
}
.receipt {
    align-self: flex-end;
    margin: 18px 60px 0 0;
    font-size: 34px;
    font-weight: 600;
    line-height: 40px;
    color: #8a8a8e;
}

/* Compose bar */
.compose {
    display: flex;
    gap: 36px;
    padding: 51px 60px 51px 59px;
}
.add,
.field {
    height: 120px;
    border-radius: 60px;
    background: #fff;
    box-shadow: 0 12px 60px rgba(0, 0, 0, 0.08);
}
.add {
    flex: none;
    width: 120px;
}
.add svg {
    width: 48px;
    height: 48px;
}
.field {
    flex: 1;
    display: flex;
    align-items: center;
    padding: 0 42px 0 45px;
}
.caret {
    width: 6px;
    height: 66px;
    border-radius: 3px;
    background: #1a82f0;
}
.field input::placeholder {
    color: #c5c5c7;
}
.voice {
    color: #b2b4b9;
}
.voice svg {
    width: 40px;
    height: 56px;
}

/* Emoji keyboard */
.keyboard {
    flex: none;
    margin-bottom: -48px;
    padding: 27px 0 87px;
    border-radius: 110px 110px 180px 180px;
    background: #e1e4e6;
    box-shadow: 0 0 0 3px #fff;
}
.search-row {
    display: flex;
    gap: 27px;
    padding: 0 27px 0 26px;
}
.search,
.genmoji {
    display: flex;
    align-items: center;
    height: 120px;
    border-radius: 60px;
    background: #eeeff4;
}
.search {
    flex: 1;
    gap: 22px;
    padding: 0 39px;
}
.search svg {
    width: 50px;
    height: 50px;
}
.search input::placeholder {
    color: #87898d;
}
.genmoji {
    flex: none;
    width: 320px;
    gap: 12px;
    font-weight: 500;
}
.genmoji svg {
    width: 54px;
    height: 54px;
}
.genmoji span {
    background: linear-gradient(90deg, #4cc2ee, #a8a4c8 40%, #ea6a7c 70%, #f84458);
    background-clip: text;
    -webkit-background-clip: text;
    color: transparent;
}
.emoji-grid {
    display: grid;
    grid-template-columns: repeat(8, 1fr);
    grid-auto-rows: 161px;
    padding: 36px 7px 22px 21px;
}
.emoji-grid svg {
    width: 114px;
    height: 114px;
}
.brown {
    fill: #7a4a08;
}
.line {
    fill: none;
    stroke: #7a4a08;
    stroke-width: 4px;
    stroke-linecap: round;
}
.thick {
    stroke-width: 6px;
}
.zzz text {
    font-family: Inter, "Liberation Sans", sans-serif;
    font-weight: 800;
    fill: #0a50cc;
}
.badge-digit {
    font-size: 26px;
    font-weight: 800;
    fill: #54739a;
}

/* Category tabs */
.tab-bar {
    display: flex;
    align-items: center;
    padding: 0 53px 0 51px;
}
.abc {
    flex: none;
    justify-content: flex-start;
    width: 138px;
    font-size: 42px;
    color: #111;
}
.tabs {
    flex: 1;
    display: grid;
    grid-template-columns: repeat(11, 1fr);
    justify-items: center;
}
.tabs button {
    width: 90px;
    height: 90px;
    margin: 0 -3px;
    border-radius: 50%;
}
.tabs svg {
    height: 54px;
}
.tabs .active {
    background: #d1d2d6;
}
.tab-line {
    fill: none;
    stroke: #50545d;
    stroke-width: 4px;
    stroke-linecap: round;
    stroke-linejoin: round;
}
.thin {
    stroke-width: 3px;
}
.delete {
    flex: none;
    justify-content: flex-end;
    width: 136px;
}
.delete svg {
    width: 66px;
    height: 56px;
}
.bottom-row {
    display: flex;
    align-items: center;
    justify-content: space-between;
    height: 90px;
    margin-top: 88px;
    padding: 0 97px 0 86px;
}
.globe {
    width: 82px;
    height: 82px;
}
.dictate {
    width: 60px;
    height: 86px;
}
```
